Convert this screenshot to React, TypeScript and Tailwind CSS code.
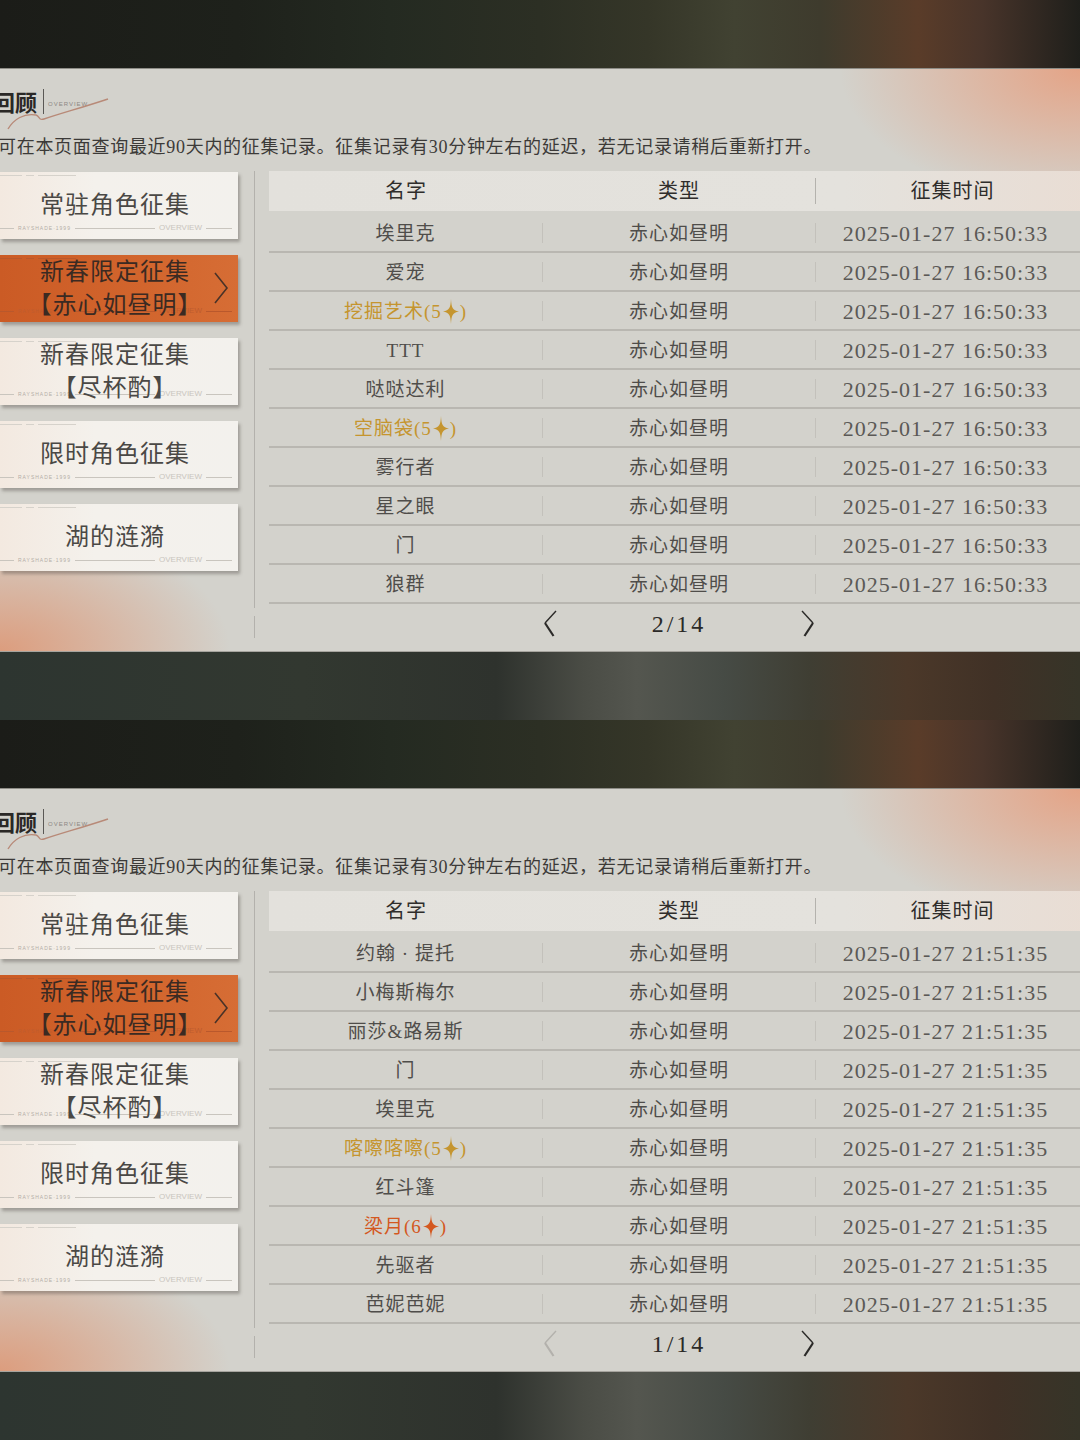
import clsx from "clsx";

type Row = { name: string; star?: 5 | 6 };

const pageOne: Row[] = [
  { name: "埃里克" },
  { name: "爱宠" },
  { name: "挖掘艺术", star: 5 },
  { name: "TTT" },
  { name: "哒哒达利" },
  { name: "空脑袋", star: 5 },
  { name: "雾行者" },
  { name: "星之眼" },
  { name: "门" },
  { name: "狼群" },
];

const pageTwo: Row[] = [
  { name: "约翰 · 提托" },
  { name: "小梅斯梅尔" },
  { name: "丽莎&路易斯" },
  { name: "门" },
  { name: "埃里克" },
  { name: "喀嚓喀嚓", star: 5 },
  { name: "红斗篷" },
  { name: "梁月", star: 6 },
  { name: "先驱者" },
  { name: "芭妮芭妮" },
];

const navItems = [
  { lines: ["常驻角色征集"] },
  { lines: ["新春限定征集", "【赤心如昼明】"], active: true },
  { lines: ["新春限定征集", "【尽杯酌】"] },
  { lines: ["限时角色征集"] },
  { lines: ["湖的涟漪"] },
];

function Sparkle({ color }: { color: string }) {
  return (
    <svg width="16" height="25" viewBox="0 0 16 25" className="mx-[1px] inline-block align-[-6px]">
      <path
        d="M8 0 C8.5 8.5 9.4 11.4 16 12.5 C9.4 13.6 8.5 16.5 8 25 C7.5 16.5 6.6 13.6 0 12.5 C6.6 11.4 7.5 8.5 8 0Z"
        fill={color}
      />
    </svg>
  );
}

function NavButton({ lines, active }: { lines: string[]; active?: boolean }) {
  return (
    <div
      className={clsx(
        "relative h-[67px] w-[238px] shadow-[2px_3px_3px_rgba(60,55,50,0.35)]",
        active
          ? "bg-[linear-gradient(90deg,#cb5b25,#d2652d_60%,#d66d35)]"
          : "bg-[linear-gradient(90deg,#f3e9e0,#f4f1ec_40%,#f3f1ed)]"
      )}
    >
      {/* top deco */}
      <div className="absolute left-0 top-[3px] flex items-center gap-[4px]">
        <span className={clsx("h-px w-[22px]", active ? "bg-[#b9582c]" : "bg-[#d6d2cb]")} />
        <span className={clsx("h-px w-[8px]", active ? "bg-[#b9582c]" : "bg-[#d6d2cb]")} />
        <span className={clsx("h-px w-[38px]", active ? "bg-[#b9582c]" : "bg-[#d6d2cb]")} />
      </div>
      {/* bottom deco */}
      <div className="absolute bottom-[7px] left-0 right-[6px] flex items-center gap-[4px]">
        <span className={clsx("h-px w-[14px]", active ? "bg-[#b9582c]" : "bg-[#c9c5be]")} />
        <span
          className={clsx(
            "text-[5px] leading-none tracking-[1px] font-['Liberation_Sans',sans-serif]",
            active ? "text-[#bf5c2e]" : "text-[#b3aea7]"
          )}
        >
          RAYSHADE·1999
        </span>
        <span className={clsx("h-px flex-1", active ? "bg-[#b9582c]" : "bg-[#c9c5be]")} />
        <span
          className={clsx(
            "text-[8px] leading-none font-['Liberation_Sans',sans-serif]",
            active ? "text-[#bf5c2e]" : "text-[#c9c5be]"
          )}
        >
          OVERVIEW
        </span>
        <span className={clsx("h-px w-[26px]", active ? "bg-[#b9582c]" : "bg-[#c9c5be]")} />
      </div>
      <div
        className={clsx(
          "relative flex h-full flex-col items-center justify-center pr-[8px] text-[24px] leading-[33px] tracking-[1px] font-['Liberation_Serif','Noto_Sans_CJK_SC',serif]",
          active ? "text-[#3b2a22]" : "text-[#4a4845]"
        )}
      >
        {lines.map((l) => (
          <span key={l}>{l}</span>
        ))}
      </div>
      {active && (
        <svg width="16" height="32" viewBox="0 0 16 32" className="absolute right-[9px] top-[17px]">
          <path d="M2 1 L14 16 L2 31" fill="none" stroke="#4a3328" strokeWidth="1.6" />
        </svg>
      )}
    </div>
  );
}

function Chevron({ dir, dim }: { dir: "left" | "right"; dim?: boolean }) {
  const c = dim ? "#b3b1ac" : "#2b2a28";
  return (
    <svg width="17" height="28" viewBox="0 0 17 28">
      {dir === "left" ? (
        <>
          <path d="M15 1 L4 13" stroke={c} strokeWidth="1.4" fill="none" />
          <path d="M4 13 L12.5 26" stroke={c} strokeWidth="2.2" fill="none" />
        </>
      ) : (
        <>
          <path d="M2 1 L13 13" stroke={c} strokeWidth="1.4" fill="none" />
          <path d="M13 13 L4.5 26" stroke={c} strokeWidth="2.2" fill="none" />
        </>
      )}
    </svg>
  );
}

function Table({ rows, time, page, first }: { rows: Row[]; time: string; page: string; first?: boolean }) {
  return (
    <div className="w-[820px] shrink-0 font-['Liberation_Serif','Noto_Sans_CJK_SC',serif]">
      <div className="flex h-[40px] items-center bg-[linear-gradient(90deg,#e3e1dc,#e4e2dd_70%,#e9ddd4)] text-[20px] tracking-[1px] text-[#2f2d2b]">
        <div className="w-[274px] text-center">名字</div>
        <div className="w-[272px] text-center">类型</div>
        <span className="h-[26px] w-px bg-[#b4b2ad]" />
        <div className="w-[273px] text-center">征集时间</div>
      </div>
      <div className="mt-[3px]">
        {rows.map((r, i) => {
          const color = r.star === 6 ? "text-[#d4581f]" : r.star === 5 ? "text-[#c5952f]" : "text-[#4f4d4a]";
          return (
            <div key={i} className="flex h-[39px] items-center border-b-2 border-[#b9b7b1]">
              <div className={clsx("w-[273px] pt-[3px] text-center text-[19px] tracking-[1px]", color)}>
                {r.star ? (
                  <>
                    {r.name}({r.star}
                    <Sparkle color={r.star === 6 ? "#d4581f" : "#c5952f"} />)
                  </>
                ) : (
                  r.name
                )}
              </div>
              <span className="h-[20px] w-px bg-[#c3c1bb]" />
              <div className="w-[272px] pt-[3px] text-center text-[19px] tracking-[1px] text-[#4f4d4a]">赤心如昼明</div>
              <span className="h-[20px] w-px bg-[#c3c1bb]" />
              <div className="w-[273px] pr-[14px] pt-[1px] text-center text-[22px] tracking-[1px] text-[#5b5956]">{time}</div>
            </div>
          );
        })}
      </div>
      <div className="flex h-[40px] items-center">
        <div className="w-[272px]" />
        <Chevron dir="left" dim={first} />
        <div className="w-[242px] text-center text-[24px] tracking-[3px] text-[#2b2a28]">{page}</div>
        <Chevron dir="right" />
      </div>
    </div>
  );
}

function Panel({ rows, time, page, first }: { rows: Row[]; time: string; page: string; first?: boolean }) {
  return (
    <section className="h-[584px] overflow-hidden border-t border-b border-t-[#8e8d87] border-b-[#a6a49e] bg-[#d3d2cc] bg-[radial-gradient(ellipse_240px_135px_at_100%_0%,#e4a487_0%,#e4a48700_100%),radial-gradient(ellipse_230px_130px_at_0%_100%,#dc9d7e_0%,#dc9d7e00_100%)]">
      <div className="relative ml-[-7px] mt-[18px] flex h-[28px] items-center">
        <span className="text-[22px] font-bold leading-[28px] text-[#2a2826] font-['Noto_Sans_CJK_SC',sans-serif]">回顾</span>
        <span className="ml-[6px] h-[25px] w-px bg-[#5a5855]" />
        <span className="ml-[4px] mt-[6px] text-[6px] tracking-[1px] text-[#8c8883] font-['Liberation_Sans',sans-serif]">OVERVIEW</span>
        <svg width="110" height="36" viewBox="0 0 110 36" className="absolute left-[7px] top-[8px]">
          <path
            d="M8 34 C14 24 24 18 36 20 C40 21 38 26 44 24 C62 18 84 12 108 4"
            fill="none"
            stroke="#b88a78"
            strokeWidth="1.4"
          />
        </svg>
      </div>
      <p className="ml-[-2px] mt-[20px] h-[24px] whitespace-nowrap text-[18px] leading-[24px] tracking-[0.7px] text-[#3c3a38] font-['Liberation_Serif','Noto_Sans_CJK_SC',serif]">
        可在本页面查询最近90天内的征集记录。征集记录有30分钟左右的延迟，若无记录请稍后重新打开。
      </p>
      <div className="mt-[12px] flex">
        <div className="mt-[1px] flex w-[238px] shrink-0 flex-col gap-[16px]">
          {navItems.map((n, i) => (
            <NavButton key={i} lines={n.lines} active={n.active} />
          ))}
        </div>
        <div className="ml-[16px] flex w-px shrink-0 flex-col gap-[8px]">
          <div className="h-[437px] w-px bg-[#b3b1ac]" />
          <div className="h-[22px] w-px bg-[#b3b1ac]" />
        </div>
        <div className="ml-[14px]">
          <Table rows={rows} time={time} page={page} first={first} />
        </div>
      </div>
    </section>
  );
}

function BandA() {
  return (
    <div className="h-[68px] bg-[linear-gradient(90deg,#1b1c18_0%,#1e211b_22%,#242a21_36%,#2c2f24_50%,#353628_60%,#414232_68%,#3e3b2d_76%,#5a3c29_85%,#48342a_91%,#1f1f1b_100%)]" />
  );
}

function BandB() {
  return (
    <div className="h-[68px] bg-[linear-gradient(90deg,#2d3530_0%,#323830_28%,#2e322d_46%,#4a4c45_54%,#54564f_59%,#464b45_67%,#3f3e33_75%,#4b3829_84%,#403126_92%,#363428_100%)]" />
  );
}

export default function App() {
  return (
    <div className="h-[1440px] w-[1080px] overflow-hidden bg-[#1d1e1a]">
      <BandA />
      <Panel rows={pageOne} time="2025-01-27 16:50:33" page="2/14" />
      <BandB />
      <BandA />
      <Panel rows={pageTwo} time="2025-01-27 21:51:35" page="1/14" first />
      <BandB />
    </div>
  );
}
